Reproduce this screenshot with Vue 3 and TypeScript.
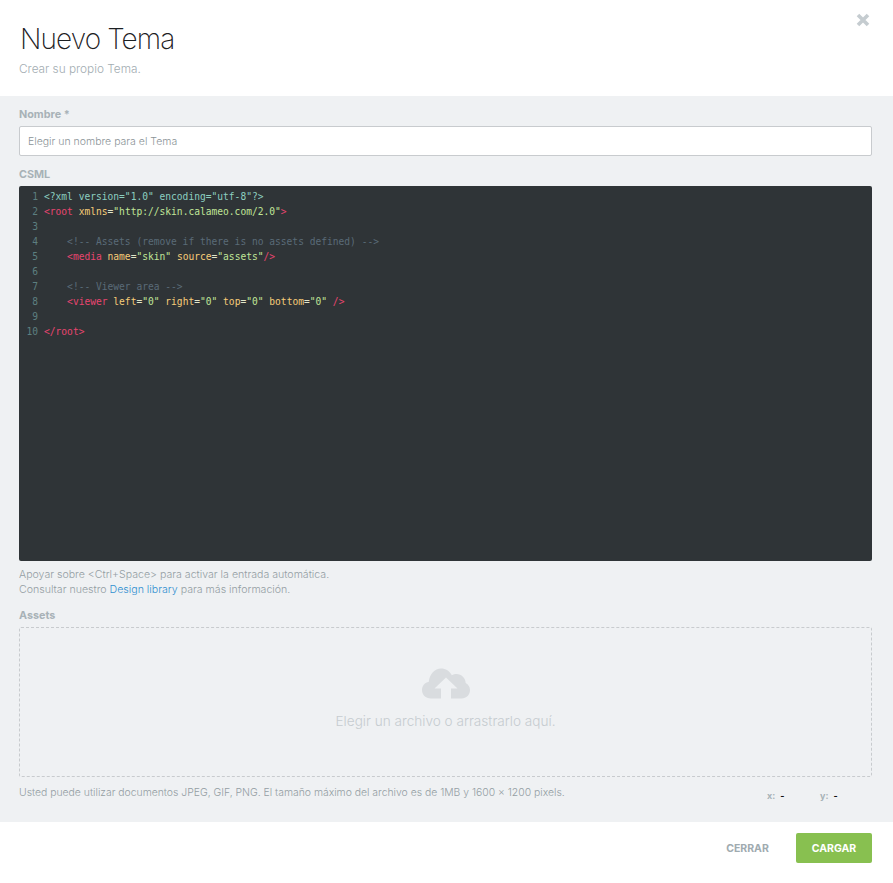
<script setup lang="ts">
type Tok = { c: string; t: string };
const t = (c: string, s: string): Tok => ({ c, t: s });
const lines: Tok[][] = [
  [t('pi', '<?xml version="1.0" encoding="utf-8"?>')],
  [t('tag', '<root '), t('attr', 'xmlns'), t('eq', '='), t('str', '"http://skin.calameo.com/2.0"'), t('tag', '>')],
  [],
  [t('cm', '    <!-- Assets (remove if there is no assets defined) -->')],
  [t('tag', '    <media '), t('attr', 'name'), t('eq', '='), t('str', '"skin"'), t('eq', ' '), t('attr', 'source'), t('eq', '='), t('str', '"assets"'), t('tag', '/>')],
  [],
  [t('cm', '    <!-- Viewer area -->')],
  [t('tag', '    <viewer '), t('attr', 'left'), t('eq', '='), t('str', '"0"'), t('eq', ' '), t('attr', 'right'), t('eq', '='), t('str', '"0"'), t('eq', ' '), t('attr', 'top'), t('eq', '='), t('str', '"0"'), t('eq', ' '), t('attr', 'bottom'), t('eq', '='), t('str', '"0"'), t('eq', ' '), t('tag', '/>')],
  [],
  [t('tag', '</root>')],
];
</script>

<template>
  <div class="modal">
    <header class="head">
      <h1>Nuevo Tema</h1>
      <p>Crear su propio Tema.</p>
      <svg class="close" viewBox="0 0 14 14" width="14" height="14" aria-hidden="true">
        <path d="M2 2 L12 12 M12 2 L2 12" stroke="#c5ccd0" stroke-width="3.6" fill="none" />
      </svg>
    </header>

    <main class="body">
      <label class="label first">Nombre *</label>
      <div class="input">Elegir un nombre para el Tema</div>

      <label class="label csml">CSML</label>
      <div class="editor">
        <div v-for="(line, i) in lines" :key="i" class="line">
          <span class="num">{{ i + 1 }}</span>
          <span class="code"><span v-for="(tok, j) in line" :key="j" :class="tok.c">{{ tok.t }}</span></span>
        </div>
      </div>

      <div class="hint">
        <div>Apoyar sobre &lt;Ctrl+Space&gt; para activar la entrada automática.</div>
        <div>Consultar nuestro <a>Design library</a> para más información.</div>
      </div>

      <label class="label assets">Assets</label>
      <div class="drop">
        <svg class="cloud" viewBox="0 0 50 32" width="50" height="32" aria-hidden="true">
          <path fill="#d9dcdf" d="M10 31.500C4.500 31.500 1 27.500 1 23c0-4.300 3-7.500 6.800-8.300C8.500 7 13.800 1.500 20 1.500c4.700 0 8.700 2.700 10.800 6.700 1.500-.9 3-1.300 4.700-1.300 5 0 9 4 9.200 9 2.600 1.300 4.300 4 4.300 7.100 0 4.700-3.500 8.500-8.500 8.500H30V21.500h6.500L25 10.500 13.500 21.500H20v10z" />
        </svg>
        <div class="drop-text">Elegir un archivo o arrastrarlo aquí.</div>
      </div>

      <div class="note-row">
        <div class="note">Usted puede utilizar documentos JPEG, GIF, PNG. El tamaño máximo del archivo es de 1MB y 1600 x 1200 pixels.</div>
        <div class="coords">
          <span class="coord"><b>x:</b>-</span>
          <span class="coord"><b>y:</b>-</span>
        </div>
      </div>
    </main>

    <footer class="foot">
      <button class="btn ghost">CERRAR</button>
      <button class="btn primary">CARGAR</button>
    </footer>
  </div>
</template>

<style scoped>
.modal {
  width: 893px;
  height: 883px;
  display: flex;
  flex-direction: column;
  background: #fff;
  font-family: "Inter", "Noto Sans", sans-serif;
  overflow: hidden;
}
.head {
  position: relative;
  height: 96px;
  box-sizing: border-box;
  padding: 22px 19px 0;
}
.head h1 {
  margin: 0 0 0 1px;
  font-size: 28px;
  line-height: 34px;
  font-weight: 200;
  color: #1c2023;
  letter-spacing: -0.9px;
}
.head p {
  margin: 4px 0 0;
  font-size: 11.800px;
  line-height: 18px;
  font-weight: 300;
  color: #a3adb2;
}
.close {
  position: absolute;
  top: 13px;
  right: 23px;
}
.body {
  height: 726px;
  box-sizing: border-box;
  background: #eff1f3;
  padding: 0 21px 0 19px;
  display: flex;
  flex-direction: column;
}
.label {
  display: block;
  font-size: 10.800px;
  line-height: 14px;
  font-weight: 700;
  color: #a8b2b7;
}
.first { margin-top: 12px; }
.input {
  margin-top: 4px;
  height: 30px;
  box-sizing: border-box;
  background: #fff;
  border: 1px solid #c8cbce;
  border-radius: 2px;
  padding: 0 8px;
  font-size: 10.500px;
  line-height: 29px;
  font-weight: 300;
  color: #8b9397;
}
.csml { margin-top: 12px; }
.editor {
  margin-top: 4px;
  height: 375px;
  box-sizing: border-box;
  background: #2f3437;
  border-radius: 2px;
  padding: 3px 0 0;
  font-family: "DejaVu Sans Mono", monospace;
  font-size: 9.600px;
  line-height: 15px;
}
.line {
  display: flex;
  height: 15px;
  white-space: pre;
}
.num {
  width: 19px;
  text-align: right;
  color: #5d7f80;
  flex: none;
}
.code { margin-left: 6px; }
.pi { color: #8ccfc0; }
.tag { color: #e8456f; }
.attr { color: #f7cd78; }
.eq { color: #e2e6ca; }
.str { color: #c0e698; }
.cm { color: #5a6b77; }
.hint {
  margin-top: 6px;
  font-size: 10.600px;
  line-height: 15px;
  font-weight: 300;
  color: #949ea3;
}
.hint a { color: #2f8fd0; }
.assets { margin-top: 12px; }
.drop {
  margin-top: 4px;
  height: 150px;
  box-sizing: border-box;
  border: 1px dashed #c8cbce;
  border-radius: 2px;
  display: flex;
  flex-direction: column;
  align-items: center;
  padding-top: 39px;
}
.drop-text {
  margin-top: 12px;
  font-size: 13.600px;
  line-height: 20px;
  font-weight: 300;
  color: #c6ccd0;
}
.note-row {
  position: relative;
  margin-top: 8px;
}
.note {
  font-size: 10.400px;
  line-height: 15px;
  font-weight: 300;
  color: #949ea3;
}
.coords {
  position: absolute;
  left: 748px;
  top: 5px;
  display: flex;
  gap: 36px;
  font-size: 9px;
  line-height: 12px;
  font-weight: 700;
  color: #111;
}
.coord { width: 17px; white-space: nowrap; }
.coord b { color: #a8b2b7; font-weight: 700; margin-right: 5px; }
.foot {
  flex: 1;
  display: flex;
  justify-content: flex-end;
  align-items: flex-start;
  padding: 11px 21px 0 0;
  gap: 16px;
}
.btn {
  height: 30px;
  border: 0;
  border-radius: 2px;
  font-family: inherit;
  font-size: 10.500px;
  font-weight: 700;
  padding: 0;
}
.ghost {
  width: 65px;
  background: transparent;
  color: #a0abb0;
}
.primary {
  width: 76px;
  background: #88c050;
  color: #fff;
}
</style>

<style>
html, body { margin: 0; background: #fff; }
</style>
